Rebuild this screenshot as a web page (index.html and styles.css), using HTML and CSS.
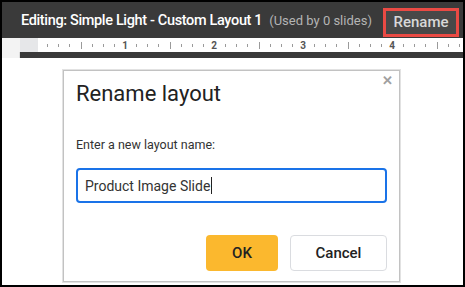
FILE: index.html
```html
<!DOCTYPE html>
<html lang="en">
<head>
    <meta charset="UTF-8">
    <meta name="viewport" content="width=device-width, initial-scale=1.0">
    <title>Rename layout</title>
    <link rel="stylesheet" href="styles.css">
</head>
<body>
    <div class="frame">
        <div class="edit-bar">
            <span class="edit-title">Editing: Simple Light - Custom Layout 1</span>
            <span class="edit-used">(Used by 0 slides)</span>
            <button class="rename-btn">Rename</button>
        </div>

        <div class="ruler-row">
            <div class="ruler-corner"></div>
            <div class="ruler-gutter"></div>
            <svg class="ruler" width="425" height="14" viewBox="0 0 425 14">
                <g stroke="#9a9a9a" stroke-width="1">
                    <!-- ticks every 1/8 inch, 89px per inch, origin at x=-2 -->
                    <path d="M9.5 6v3M20.5 6v3M31.5 6v3M43.5 4v7M54.5 6v3M65.5 6v3M76.5 6v3
                             M98.5 6v3M109.5 6v3M120.5 6v3M132.5 4v7M143.5 6v3M154.5 6v3M165.5 6v3
                             M187.5 6v3M198.5 6v3M209.5 6v3M221.5 4v7M232.5 6v3M243.5 6v3M254.5 6v3
                             M276.5 6v3M287.5 6v3M298.5 6v3M310.5 4v7M321.5 6v3M332.5 6v3M343.5 6v3
                             M365.5 6v3M376.5 6v3M387.5 6v3M399.5 4v7M410.5 6v3M421.5 6v3"/>
                </g>
                <g class="ruler-num" text-anchor="middle">
                    <text x="87" y="10.5">1</text>
                    <text x="176" y="10.5">2</text>
                    <text x="265" y="10.5">3</text>
                    <text x="354" y="10.5">4</text>
                </g>
            </svg>
        </div>

        <div class="canvas-strip">
            <div class="strip-side"></div>
            <div class="strip-dark"></div>
        </div>

        <div class="page">
            <div class="dialog">
                <span class="dialog-close">&#x2715;</span>
                <h2 class="dialog-title">Rename layout</h2>
                <p class="dialog-label">Enter a new layout name:</p>
                <div class="name-input">Product Image Slide<span class="caret"></span></div>
                <div class="dialog-actions">
                    <button class="btn btn-ok">OK</button>
                    <button class="btn btn-cancel">Cancel</button>
                </div>
            </div>
        </div>
    </div>
</body>
</html>
```

FILE: styles.css
```css
* {
    box-sizing: border-box;
}
body {
    margin: 0;
    background-color: #000;
    font-family: Roboto, "Liberation Sans", Arial, sans-serif;
}
.frame {
    width: 465px;
    height: 287px;
    border: 2px solid #000;
    background-color: #fff;
    overflow: hidden;
}
.edit-bar {
    height: 36px;
    background-color: #3a3a3a;
    display: flex;
    align-items: center;
    padding: 0 4px 0 19px;
    white-space: nowrap;
}
.edit-title {
    color: #fff;
    font-size: 14.5px;
    font-weight: 500;
    letter-spacing: -0.35px;
    flex-shrink: 0;
}
.edit-used {
    color: #b4b4b4;
    font-size: 13px;
    margin-left: 7px;
    flex-shrink: 0;
}
.rename-btn {
    flex-shrink: 0;
    margin-left: auto;
    width: 76px;
    height: 29px;
    margin-top: 4px;
    background-color: #484848;
    color: #d8d8d8;
    border: 3px solid #ea4a44;
    font-family: inherit;
    font-size: 15px;
    font-weight: 500;
    padding: 0;
}
.ruler-row {
    height: 14px;
    display: flex;
    background-color: #fff;
}
.ruler-corner {
    width: 18px;
    background-color: #f3f3f3;
}
.ruler-gutter {
    width: 18px;
    background-color: #e6e7e9;
}
.ruler {
    display: block;
}
.ruler-num {
    font-size: 10px;
    font-weight: bold;
    fill: #555;
}
.canvas-strip {
    height: 6px;
    display: flex;
}
.strip-side {
    width: 18px;
    background-color: #f3f3f3;
    border-right: 1px solid #ddd;
}
.strip-dark {
    flex: 1;
    background-color: #3a3a3a;
}
.page {
    padding: 12px 0 0 61px;
}
.dialog {
    position: relative;
    width: 337px;
    height: 212px;
    border: 1px solid #c2c2c2;
    box-shadow: 0 0 0 1px #e2e2e2;
    padding: 8px 12px 0 12px;
}
.dialog-close {
    position: absolute;
    top: 2px;
    right: 6px;
    color: #a0a0a0;
    font-size: 13px;
    font-weight: bold;
}
.dialog-title {
    margin: 0;
    font-size: 22px;
    font-weight: normal;
    color: #222;
    line-height: 30px;
}
.dialog-label {
    margin: 28px 0 0 0;
    font-size: 12.5px;
    color: #333;
    line-height: 16px;
}
.name-input {
    margin-top: 15px;
    height: 35px;
    border: 2px solid #1a73e8;
    border-radius: 4px;
    padding-left: 7px;
    display: flex;
    align-items: center;
    font-size: 14px;
    color: #333;
}
.caret {
    display: inline-block;
    width: 1px;
    height: 17px;
    margin-left: 1px;
    background-color: #222;
}
.dialog-actions {
    margin-top: 32px;
    display: flex;
    justify-content: flex-end;
    gap: 12px;
}
.btn {
    height: 36px;
    border-radius: 4px;
    font-family: inherit;
    font-size: 15px;
    font-weight: 500;
    color: #222;
    padding: 0;
}
.btn-ok {
    width: 72px;
    background-color: #fbb82e;
    border: none;
}
.btn-cancel {
    width: 97px;
    background-color: #fff;
    border: 1px solid #dadce0;
}
```
